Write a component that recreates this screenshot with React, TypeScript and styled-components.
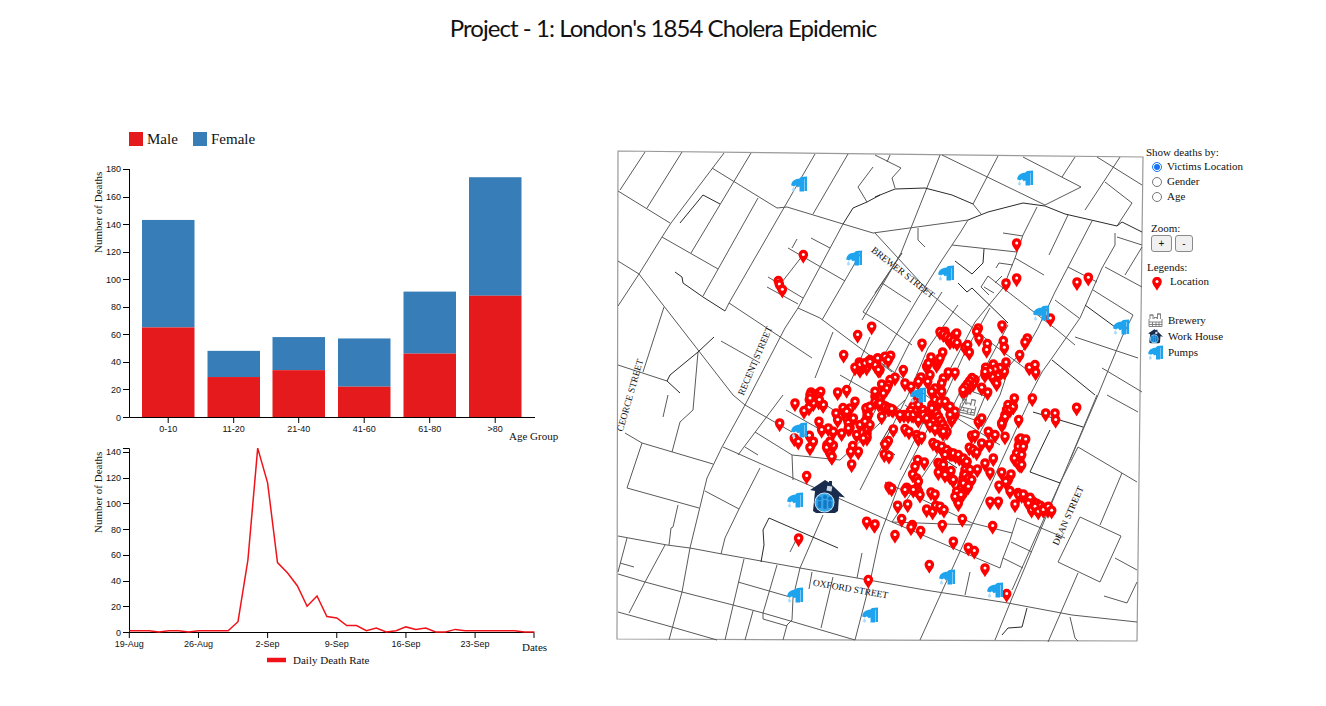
import styled, { createGlobalStyle } from "styled-components";

const GlobalStyle = createGlobalStyle`
  html, body {
    margin: 0;
    background: #fff;
    color: #111;
    font-family: "Liberation Serif", "Times New Roman", serif;
  }
`;

const Title = styled.h1`
  margin: 0;
  height: 128px;
  padding-top: 13px;
  box-sizing: border-box;
  text-align: center;
  font-family: "Lato", sans-serif;
  font-size: 24px;
  line-height: 30px;
  letter-spacing: -0.95px;
  font-weight: 400;
  color: #111;
`;

const Content = styled.main`
  display: flex;
  align-items: flex-start;
  padding-left: 80px;
`;

const ChartColumn = styled.section`
  display: flex;
  flex-direction: column;
  width: 530px;
  flex: none;
`;

const GenderLegend = styled.div`
  display: flex;
  align-items: center;
  height: 22px;
  margin-left: 49px;
  font-size: 15px;
`;

const GenderItem = styled.span`
  display: flex;
  align-items: center;
  width: 64px;
  gap: 4px;
`;

const Swatch = styled.i<{ $color: string }>`
  display: block;
  width: 14px;
  height: 14px;
  background: ${(props) => props.$color};
`;

const ChartSvg = styled.svg`
  display: block;
  flex: none;
`;

const MapSvg = styled.svg`
  display: block;
  flex: none;
  margin-top: 17px;
`;

const AxisLine = styled.path`
  fill: none;
  stroke: #000;
  stroke-width: 1;
`;

const TickLabel = styled.text`
  font-family: "Liberation Sans", Arial, sans-serif;
  font-size: 9px;
  fill: #111;
`;

const AxisTitle = styled.text`
  font-family: "Liberation Serif", "Times New Roman", serif;
  font-size: 11px;
  fill: #111;
`;

const DeathLine = styled.path`
  fill: none;
  stroke: #f01218;
  stroke-width: 1.5;
`;

const Street = styled.path<{ $dark?: boolean }>`
  fill: none;
  stroke: ${(props) => (props.$dark ? "#2a2a2a" : "#5a5a5a")};
  stroke-width: 1;
`;

const MapFrame = styled.path`
  fill: #fff;
  stroke: #999;
  stroke-width: 1.2;
`;

const StreetLabel = styled.text`
  font-family: "Liberation Serif", "Times New Roman", serif;
  font-size: 9.5px;
  fill: #111;
  text-anchor: middle;
`;

const Controls = styled.aside`
  display: flex;
  flex-direction: column;
  align-items: flex-start;
  margin-top: 17px;
  font-size: 11px;
  line-height: 15px;
`;

const RadioGroup = styled.div`
  display: flex;
  flex-direction: column;
  margin-top: -1px;
`;

const RadioRow = styled.label`
  display: flex;
  align-items: center;
  gap: 5px;
  height: 15px;
  margin-left: 6px;
`;

const Radio = styled.input`
  width: 10px;
  height: 10px;
  margin: 0;
  accent-color: #1a73f0;
`;

const ZoomLabel = styled.div`
  margin: 17px 0 0 5px;
`;

const ZoomButtons = styled.div`
  display: flex;
  gap: 3px;
  margin: -1px 0 0 5px;
`;

const ZoomButton = styled.button<{ $wide?: boolean }>`
  width: ${(props) => (props.$wide ? 21 : 18)}px;
  height: 17px;
  padding: 0;
  border: 1px solid #8a8a8a;
  border-radius: 3px;
  background: #f0f0f0;
  font-family: "Liberation Sans", Arial, sans-serif;
  font-size: 10px;
  color: #111;
`;

const LegendTitle = styled.div`
  margin: 8px 0 0 1px;
`;

const LocationRow = styled.div`
  display: flex;
  align-items: flex-start;
  gap: 8px;
  height: 38px;
  margin: -1px 0 0 6px;
`;

const LocationPin = styled.svg`
  display: block;
  flex: none;
  margin-top: 3px;
`;

const LegendRow = styled.div`
  display: flex;
  align-items: center;
  gap: 5px;
  height: 16.4px;
  margin-left: 2px;
`;

const LegendIcon = styled.svg`
  display: block;
  flex: none;
`;

const males = [65, 29, 34, 22, 46, 88];
const totals = [143, 48, 58, 57, 91, 174];
const groups = ["0-10", "11-20", "21-40", "41-60", "61-80", ">80"];
const barLeft = [142, 207.5, 272.5, 338, 403.5, 469];
const barY = (v: number) => 417 - v * 1.378;

const daily = [
  1, 1, 1, 0, 1, 1, 0, 1, 1, 1, 1, 8, 56, 143, 116, 54, 46, 36, 20, 28, 12, 11,
  5, 5, 1, 3, 0, 1, 4, 2, 3, 0, 0, 2, 1, 1, 1, 1, 1, 1, 0, 0,
];
const lineX = (i: number) => 129.3 + i * 9.88;
const lineY = (v: number) => 632 - v * 1.286;
const dates = ["19-Aug", "26-Aug", "2-Sep", "9-Sep", "16-Sep", "23-Sep"];

const streets = [
  "M645 152L620 190",
  "M682 152L647 208",
  "M724 153L671 223L662 237L639 274L618 306",
  "M751 153L691 253",
  "M618 191L670 223",
  "M712 168L777 208L787 207L843 224L873 233L968 220",
  "M758 198L703 296",
  "M815 154L729 303L725 311",
  "M848 154L813 214",
  "M662 237L718 269",
  "M618 261L639 274L733 395L745 405",
  "M729 303L812 358",
  "M664 307L643 372",
  "M618 365L667 381",
  "M721 341L760 363",
  "M843 224L798 308L785 328L745 405L722 447L707 478L690 548L682 592L669 640",
  "M873 167L858 187L867 202",
  "M797 239L792 248",
  "M788 248L845 281",
  "M811 238L830 248",
  "M803 255L782 282",
  "M768 277L803 298",
  "M767 287L798 304",
  "M798 308L820 318L892 372",
  "M862 251L822 320",
  "M902 253L863 312",
  "M863 312L880 322L912 345",
  "M833 332L815 378",
  "M875 155L901 168L892 178L895 188",
  "M890 155L887 162",
  "M940 155L901 253L862 320",
  "M942 155L1045 205",
  "M998 156L973 204L981 214",
  "M1023 157L1081 187L1045 205",
  "M1062 177L1075 157",
  "M1120 157L1085 210",
  "M1097 157L1142 185",
  "M1105 182L1132 203L1117 226",
  "M918 228L918 240L925 247",
  "M1003 233L1023 236",
  "M952 245L1017 252",
  "M968 220L960 233L942 260L918 298L880 362",
  "M1037 207L1023 235L1015 258L1003 288L975 322L938 392L900 470",
  "M1015 258L1044 275",
  "M996 268L999 263L1013 265",
  "M988 276L981 287L989 295",
  "M988 276L1003 288",
  "M1002 276L995 283",
  "M984 287L994 293",
  "M1003 288L1057 330L1075 345",
  "M1068 267L1097 282",
  "M1093 290L1133 315",
  "M1092 221L1055 292L1038 328L1030 342L1010 365L1000 395L968 455",
  "M1068 215L1049 255",
  "M1055 300L1079 318",
  "M1133 315L1122 337L1105 378L1098 395L1070 460",
  "M1117 237L1142 245",
  "M1142 247L1125 275",
  "M1105 267L1142 287",
  "M1102 368L1142 392",
  "M1075 337L1138 358",
  "M875 233L932 295",
  "M882 283L911 302",
  "M902 253L875 293",
  "M942 292L910 342L895 372L860 440",
  "M958 305L928 348L908 395L860 490",
  "M990 308L965 352L947 392L900 482L880 535L870 582L855 640",
  "M1008 325L985 368L968 395L940 450L892 522",
  "M932 295L990 342L1030 372",
  "M1115 233L1115 245L1102 268L1080 318L1052 358L1042 372L1030 395",
  "M1032 395L972 525L920 640",
  "M1097 395L1010 603L995 640",
  "M1107 395L1138 412",
  "M1078 447L1137 482",
  "M1122 473L1100 525",
  "M1078 447L1060 483L1012 590",
  "M1080 517L1121 536L1100 582L1058 562Z",
  "M1115 558L1137 570",
  "M1137 582L1127 603L1104 596",
  "M618 536L667 545L690 548L722 554L800 568L857 578L925 590L1008 603L1072 615L1137 622",
  "M618 574L645 582L682 592L733 605L763 613L787 620L855 640",
  "M618 612L672 627L717 640",
  "M627 538L618 572",
  "M620 563L634 567",
  "M665 545L645 582L629 613",
  "M625 433L642 443L713 464",
  "M642 443L627 488L699 508",
  "M678 505L673 527L671 528L669 545",
  "M705 491L739 509",
  "M760 468L739 509L725 538L721 554",
  "M723 447L892 522L972 525",
  "M892 522L1000 568",
  "M738 455L783 395",
  "M745 447L758 455",
  "M755 432L792 455L793 480",
  "M745 405L792 432",
  "M663 417L668 395",
  "M672 452L680 422L693 410L698 352",
  "M790 552L797 538",
  "M823 515L800 568L793 598L792 620L787 625L783 640",
  "M777 565L763 613L763 619L787 626",
  "M744 559L725 640",
  "M753 611L745 640",
  "M738 582L790 597",
  "M812 572L809 589",
  "M833 577L821 628",
  "M862 553L857 578",
  "M885 482L972 523L1012 533",
  "M1017 518L1010 540L1003 558L1000 568",
  "M1017 518L1065 538",
  "M1011 542L1032 552",
  "M1003 558L1023 568",
  "M1078 573L1048 642",
  "M970 572L965 595",
  "M1070 617L1075 638L1078 641",
  "M792 455L840 460L905 400",
  "M786 410L835 438",
  "M810 395L865 430",
  "M840 375L880 398L935 430",
  "M880 362L960 420L1000 445",
  "M870 337L845 395",
  "M905 405L950 435",
  "M962 388L985 396L975 420L950 412Z",
];

const darkStreets = [
  "M680 223L703 195L720 204",
  "M675 272L682 277L683 283L703 297L725 311",
  "M714 337L698 352L670 375L667 381L680 393",
  "M880 195L867 202L853 208L843 224",
  "M875 197L895 189L925 188L952 195L973 204",
  "M968 220L988 212L1023 203L1045 206L1065 214L1117 226L1122 222L1142 232",
  "M955 261L972 274L983 263L984 249",
  "M958 283L967 292L972 288L1008 323",
  "M1085 305L1115 327",
  "M1052 360L1095 395",
  "M1033 412L1083 427",
  "M1050 430L1037 457L1030 472L1060 483",
  "M890 427L880 444L895 455",
  "M769 518L763 530L764 545L761 562",
  "M769 518L838 548",
  "M1027 608L1022 627L1008 628L1002 635",
  "M945 460L957 468",
];

const fromCrop = (ox: number, oy: number, points: number[][]) =>
  points.map(([x, y]) => [ox + x / 3, oy + y / 3]);

// pins stacked along a street, where the reference shows them as a solid band
const along = (x1: number, y1: number, x2: number, y2: number, count: number) =>
  Array.from({ length: count }, (_, i) => [
    x1 + ((x2 - x1) * i) / (count - 1),
    y1 + ((y2 - y1) * i) / (count - 1),
  ]);

const pins = [
  ...fromCrop(610, 145, [
    [580, 330], [505, 408], [508, 418], [517, 434], [785, 545], [743, 570], [701, 630],
    [735, 668], [748, 652], [750, 675], [765, 655], [775, 650], [780, 645], [803, 640],
    [800, 660], [810, 675], [603, 742], [625, 745], [632, 740], [683, 742], [710, 735],
    [795, 755], [760, 662], [770, 668],
  ]),
  ...fromCrop(875, 145, [
    [425, 295], [425, 400], [393, 415], [606, 412], [640, 398], [526, 520], [381, 541],
    [141, 596], [205, 565], [215, 575], [225, 590], [240, 570], [245, 565], [210, 560],
    [310, 550], [305, 560], [312, 580], [337, 597], [335, 615], [270, 607], [278, 600],
    [283, 622], [385, 588], [388, 608], [457, 580], [450, 592], [434, 630], [463, 668],
    [480, 660], [482, 682], [393, 652], [355, 658], [332, 668], [330, 690], [365, 680],
    [380, 680], [388, 680], [360, 705], [365, 715], [8, 640], [30, 635], [47, 632],
    [40, 645], [0, 660], [10, 675], [85, 675], [168, 637], [203, 622], [155, 665],
    [160, 655], [185, 660], [190, 650], [195, 640], [220, 682], [240, 683], [165, 690],
    [138, 697], [130, 710], [205, 700], [200, 715], [60, 698], [45, 705], [40, 720],
    [35, 730], [20, 718], [90, 715], [108, 725], [158, 710], [300, 705], [295, 715],
    [285, 725], [275, 730], [265, 742], [320, 728], [338, 742], [180, 730], [170, 740],
    [200, 740], [25, 745], [0, 740], [370, 690], [352, 695],
  ]),
  ...along(940, 332, 957, 343, 6),
  ...along(860, 365, 870, 362, 3),
  ...along(972, 378, 963, 390, 5),
  ...along(1000, 368, 985, 372, 4),
  ...along(875, 402, 893, 410, 6),
  ...along(900, 415, 920, 415, 6),
  ...along(918, 398, 908, 415, 5),
  ...along(932, 405, 947, 432, 8),
  ...along(945, 402, 955, 415, 4),
  ...along(1008, 405, 1002, 425, 5),
  ...along(843, 408, 850, 428, 5),
  ...along(867, 408, 867, 438, 8),
  ...along(810, 395, 823, 405, 4),
  ...along(827, 445, 832, 457, 4),
  ...along(923, 410, 943, 433, 7),
  ...along(933, 443, 967, 462, 10),
  ...along(938, 463, 953, 480, 6),
  ...along(965, 470, 958, 502, 8),
  ...along(1018, 493, 1048, 510, 9),
  ...along(1019, 440, 1020, 465, 7),
  ...along(917, 488, 920, 495, 3),
  ...fromCrop(610, 395, [
    [555, 25], [598, 15], [610, 25], [640, 30], [597, 38], [582, 48], [509, 85], [678, 55],
    [683, 75], [627, 80], [720, 40], [710, 50], [735, 20], [730, 70], [750, 90], [715, 100],
    [695, 115], [655, 100], [670, 110], [635, 105], [598, 122], [610, 140], [600, 158],
    [650, 158], [670, 152], [660, 140], [660, 175], [665, 185], [728, 153], [722, 170],
    [745, 170], [725, 208], [590, 243], [553, 130], [565, 140], [770, 380], [793, 390],
    [566, 430], [775, 555], [768, 40], [775, 60], [770, 100], [770, 125], [780, 35],
    [600, 10], [625, 5], [740, 120], [760, 130], [628, 15], [765, 80], [780, 90],
  ]),
  ...fromCrop(875, 395, [
    [15, 25], [30, 35], [40, 40], [50, 42], [20, 65], [75, 60], [100, 60], [115, 60],
    [125, 45], [130, 30], [145, 60], [155, 70], [130, 75], [165, 90], [180, 100], [205, 110],
    [55, 103], [90, 102], [102, 110], [125, 120], [130, 130], [140, 125], [390, 125],
    [180, 15], [195, 20], [210, 20], [225, 35], [240, 50], [230, 75], [225, 60], [170, 40],
    [310, 80], [320, 70], [340, 110], [360, 120], [290, 122], [300, 120], [320, 145],
    [343, 148], [380, 85], [390, 65], [405, 45], [415, 35], [418, 10], [431, 75], [472, 10],
    [512, 55], [540, 55], [542, 75], [605, 38], [437, 130], [452, 133], [430, 155], [445, 155],
    [425, 175], [440, 180], [418, 190], [430, 205], [440, 210], [40, 138], [30, 148], [28, 178],
    [42, 183], [185, 150], [200, 155], [215, 165], [225, 175], [235, 175], [250, 180], [265, 190],
    [275, 200], [210, 180], [283, 158], [295, 165], [305, 172], [355, 190], [330, 205], [345, 232],
    [380, 232], [408, 238], [400, 255], [392, 260], [372, 272], [307, 223], [285, 225], [270, 240],
    [280, 250], [265, 265], [290, 255], [280, 275], [128, 195], [148, 202], [120, 215], [113, 238],
    [125, 250], [130, 260], [195, 205], [205, 210], [190, 232], [210, 240], [228, 228], [235, 255],
    [245, 290], [265, 295], [240, 305], [250, 325], [258, 300], [168, 292], [180, 298], [345, 320],
    [370, 320], [405, 288], [420, 328], [432, 300], [445, 298], [465, 308], [460, 325], [470, 345],
    [480, 335], [490, 350], [505, 345], [520, 335], [530, 347], [42, 275], [50, 280], [95, 278],
    [115, 285], [90, 285], [68, 332], [98, 328], [155, 343], [173, 350], [182, 332], [195, 335],
    [207, 345], [262, 372], [0, 388], [80, 372], [112, 390], [108, 397], [137, 408], [202, 390],
    [353, 393], [60, 420], [235, 440], [280, 458], [298, 468], [163, 510], [330, 520], [395, 597],
  ]),
];

const pumps = [
  [799, 184], [854, 258], [1025, 178], [946, 273], [1041, 313], [1121, 327], [918, 395],
  [799, 430], [795, 500], [947, 577], [995, 590], [795, 595], [870, 615],
];

const labels = [
  { text: "BREWER STREET", x: 901, y: 275, angle: 38 },
  { text: "RECENT STREET", x: 758, y: 362, angle: -67 },
  { text: "CEORCE STREET", x: 633, y: 396, angle: -74 },
  { text: "OXFORD STREET", x: 850, y: 592, angle: 10 },
  { text: "DEAN STREET", x: 1071, y: 517, angle: -66 },
];

function IconDefs() {
  return (
    <defs>
      <g id="pin">
        <path
          fill="#f00"
          d="M0 8.8C-1.8 5.2-4.8 3-4.8-.4A4.8 4.8 0 1 1 4.8-.4C4.8 3 1.8 5.2 0 8.8Z"
        />
        <circle cy="-.4" r="1.5" fill="#fff" />
      </g>
      <g id="pump">
        <path
          fill="#1ea4ee"
          d="M.2 9.5C.5 5 4 2.8 8 2.8L10 1 16 .5V15H13.4V3H13V15.5H8.5V10.5L6.5 11.2C5.8 9.4 4 9 3.4 10.5Z"
        />
        <path
          fill="#a9dcf8"
          d="M2.5 11C3.4 12.5 4.2 13.5 3.9 14.6A1.5 1.5 0 0 1 1.1 14.6C.8 13.5 1.6 12.5 2.5 11Z"
        />
      </g>
      <g id="workhouse">
        <path
          fill="#1a2c4e"
          d="M15 0L19 2.5V1H22V5L35 17.5 29 16.5 28 31 25 33H6L3 31 5 11 0 10Z"
        />
        <rect x="17" y="6" width="5" height="5" fill="#cfd8e6" transform="rotate(10 19 8)" />
        <circle cx="14.5" cy="22.5" r="10" fill="#dff2fc" />
        <circle cx="14.5" cy="22.5" r="9.2" fill="#35a6e8" />
        <g fill="#1578c4">
          <circle cx="9.5" cy="18.5" r="2.1" />
          <circle cx="15" cy="17" r="2.1" />
          <circle cx="20" cy="18.5" r="2.1" />
          <rect x="7.8" y="21" width="3.4" height="7" rx="1.2" />
          <rect x="13.3" y="20" width="3.4" height="9" rx="1.2" />
          <rect x="18.3" y="21" width="3.4" height="7" rx="1.2" />
        </g>
      </g>
      <g id="brewery" fill="none" stroke="#777" strokeWidth=".9">
        <path d="M1 6V13.5H14V6" />
        <path d="M1 9H14M1 11.5H14M4.5 9V13.5M8 9V13.5M11 9V13.5" />
        <path d="M2 6V2H5V6M9.5 6V1H12.5V6" />
        <path d="M1.5 2H5.5M9 1H13M6 6V4.5H9V6" />
      </g>
    </defs>
  );
}

function GenderBars() {
  return (
    <ChartSvg width={500} height={295} viewBox="80 150 500 295">
      {totals.map((total, i) => (
        <g key={groups[i]}>
          <rect x={barLeft[i]} y={barY(total)} width={52.5} height={barY(males[i]) - barY(total)} fill="#377eb8" />
          <rect x={barLeft[i]} y={barY(males[i])} width={52.5} height={417 - barY(males[i])} fill="#e41a1c" />
          <AxisLine d={`M${barLeft[i] + 26.2} 417.5V423`} />
          <TickLabel x={barLeft[i] + 26.2} y={432} textAnchor="middle">
            {groups[i]}
          </TickLabel>
        </g>
      ))}
      {[0, 20, 40, 60, 80, 100, 120, 140, 160, 180].map((tick) => (
        <g key={tick}>
          <AxisLine d={`M123 ${Math.round(barY(tick)) + 0.5}H129.5`} />
          <TickLabel x={121} y={barY(tick) + 3.5} textAnchor="end">
            {tick}
          </TickLabel>
        </g>
      ))}
      <AxisLine d="M129.5 169V417.5H535" />
      <AxisTitle transform="translate(102 253) rotate(-90)">Number of Deaths</AxisTitle>
      <AxisTitle x={509} y={440}>
        Age Group
      </AxisTitle>
    </ChartSvg>
  );
}

function DailyDeaths() {
  const line = daily.map((v, i) => `${i ? "L" : "M"}${lineX(i).toFixed(1)} ${lineY(v).toFixed(1)}`).join("");
  return (
    <ChartSvg width={500} height={225} viewBox="80 445 500 225">
      {[0, 20, 40, 60, 80, 100, 120, 140].map((tick) => (
        <g key={tick}>
          <AxisLine d={`M123 ${Math.round(lineY(tick)) + 0.5}H129.5`} />
          <TickLabel x={121} y={lineY(tick) + 3.5} textAnchor="end">
            {tick}
          </TickLabel>
        </g>
      ))}
      {dates.map((date, i) => (
        <g key={date}>
          <AxisLine d={`M${lineX(i * 7)} 632V638`} />
          <TickLabel x={lineX(i * 7)} y={647} textAnchor="middle">
            {date}
          </TickLabel>
        </g>
      ))}
      <AxisLine d="M123 448.5H129.5V632.5H534V638" />
      <DeathLine d={line} />
      <AxisTitle transform="translate(102 533) rotate(-90)">Number of Deaths</AxisTitle>
      <AxisTitle x={522} y={651}>
        Dates
      </AxisTitle>
      <path d="M267 660H286" stroke="#f01218" strokeWidth={4.5} />
      <AxisTitle x={293} y={664}>
        Daily Death Rate
      </AxisTitle>
    </ChartSvg>
  );
}

function SohoMap() {
  return (
    <MapSvg width={536} height={500} viewBox="610 145 536 500">
      <IconDefs />
      <MapFrame d="M618 151L1143 157L1137 641L617 639Z" />
      {streets.map((d) => (
        <Street key={d} d={d} />
      ))}
      {darkStreets.map((d) => (
        <Street key={d} d={d} $dark />
      ))}
      {labels.map((label) => (
        <StreetLabel
          key={label.text}
          transform={`translate(${label.x} ${label.y}) rotate(${label.angle})`}
        >
          {label.text}
        </StreetLabel>
      ))}
      {pins.map(([x, y], i) => (
        <use key={i} href="#pin" x={x} y={y} />
      ))}
      <use href="#brewery" transform="translate(961 396) rotate(12) scale(1.2)" />
      {pumps.map(([x, y]) => (
        <use key={`${x}-${y}`} href="#pump" x={x - 8} y={y - 8} />
      ))}
      <use href="#workhouse" x={810} y={480} />
    </MapSvg>
  );
}

export default function App() {
  return (
    <>
      <GlobalStyle />
      <Title>Project - 1: London's 1854 Cholera Epidemic</Title>
      <Content>
        <ChartColumn>
          <GenderLegend>
            <GenderItem>
              <Swatch $color="#e41a1c" />
              Male
            </GenderItem>
            <GenderItem>
              <Swatch $color="#377eb8" />
              Female
            </GenderItem>
          </GenderLegend>
          <GenderBars />
          <DailyDeaths />
        </ChartColumn>
        <SohoMap />
        <Controls>
          <div>Show deaths by:</div>
          <RadioGroup>
            <RadioRow>
              <Radio type="radio" name="deaths" defaultChecked />
              Victims Location
            </RadioRow>
            <RadioRow>
              <Radio type="radio" name="deaths" />
              Gender
            </RadioRow>
            <RadioRow>
              <Radio type="radio" name="deaths" />
              Age
            </RadioRow>
          </RadioGroup>
          <ZoomLabel>Zoom:</ZoomLabel>
          <ZoomButtons>
            <ZoomButton $wide>+</ZoomButton>
            <ZoomButton>-</ZoomButton>
          </ZoomButtons>
          <LegendTitle>Legends:</LegendTitle>
          <LocationRow>
            <LocationPin width={10} height={14} viewBox="-5 -5 10 14">
              <use href="#pin" />
            </LocationPin>
            Location
          </LocationRow>
          <LegendRow>
            <LegendIcon width={15} height={15} viewBox="0 0 15 15">
              <use href="#brewery" />
            </LegendIcon>
            Brewery
          </LegendRow>
          <LegendRow>
            <LegendIcon width={15} height={15} viewBox="0 0 35 34">
              <use href="#workhouse" />
            </LegendIcon>
            Work House
          </LegendRow>
          <LegendRow>
            <LegendIcon width={15} height={15} viewBox="0 0 16 16">
              <use href="#pump" />
            </LegendIcon>
            Pumps
          </LegendRow>
        </Controls>
      </Content>
    </>
  );
}
